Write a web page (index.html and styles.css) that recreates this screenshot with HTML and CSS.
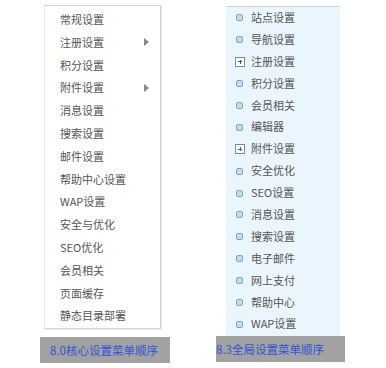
FILE: index.html
```html
<!DOCTYPE html>
<html lang="zh-CN">
<head>
  <meta charset="UTF-8">
  <title>设置菜单顺序</title>
  <link rel="stylesheet" href="styles.css">
</head>
<body>
  <div class="compare">
    <div class="col col-old">
      <ul class="menu-old">
        <li>常规设置</li>
        <li class="sub">注册设置</li>
        <li>积分设置</li>
        <li class="sub">附件设置</li>
        <li>消息设置</li>
        <li>搜索设置</li>
        <li>邮件设置</li>
        <li>帮助中心设置</li>
        <li>WAP设置</li>
        <li>安全与优化</li>
        <li>SEO优化</li>
        <li>会员相关</li>
        <li>页面缓存</li>
        <li>静态目录部署</li>
      </ul>
      <div class="caption caption-old">8.0核心设置菜单顺序</div>
    </div>

    <div class="col col-new">
      <ul class="menu-new">
        <li><span class="dot"></span>站点设置</li>
        <li><span class="dot"></span>导航设置</li>
        <li><span class="plus"></span>注册设置</li>
        <li><span class="dot"></span>积分设置</li>
        <li><span class="dot"></span>会员相关</li>
        <li><span class="dot"></span>编辑器</li>
        <li><span class="plus"></span>附件设置</li>
        <li><span class="dot"></span>安全优化</li>
        <li><span class="dot"></span>SEO设置</li>
        <li><span class="dot"></span>消息设置</li>
        <li><span class="dot"></span>搜索设置</li>
        <li><span class="dot"></span>电子邮件</li>
        <li><span class="dot"></span>网上支付</li>
        <li><span class="dot"></span>帮助中心</li>
        <li><span class="dot"></span>WAP设置</li>
      </ul>
      <div class="caption caption-new">8.3全局设置菜单顺序</div>
    </div>
  </div>
</body>
</html>
```

FILE: styles.css
```css
body {
  margin: 0;
  background: #fff;
  font-family: "Noto Sans CJK SC", "Noto Sans", sans-serif;
  font-size: 11px;
  color: #555;
}
ul {
  list-style: none;
  margin: 0;
  padding: 0;
}
.compare {
  display: flex;
  align-items: flex-start;
}
.col {
  display: flex;
  flex-direction: column;
}
.col-old {
  margin-left: 40px;
  width: 130px;
  padding-top: 5px;
}
.col-new {
  margin-left: 46px;
  width: 129px;
  padding-top: 6px;
}

/* 8.0 菜单 */
.menu-old {
  margin-left: 4px;
  width: 115px;
  border-top: 1px solid #d4d4d4;
  border-left: 1px solid #e6e6e6;
  border-right: 1px solid #cfcfcf;
  border-bottom: 1px solid #d4d4d4;
  box-shadow: 1px 1px 1px #eee;
  padding: 2px 0 1px;
  background: #fff;
}
.menu-old li {
  height: 22.8px;
  line-height: 22.8px;
  padding-left: 15px;
  position: relative;
}
.menu-old li.sub::after {
  content: "";
  position: absolute;
  right: 11px;
  top: 7.5px;
  border-left: 5px solid #888;
  border-top: 4px solid transparent;
  border-bottom: 4px solid transparent;
}

/* 8.3 菜单 */
.menu-new {
  margin-left: 10px;
  width: 114px;
  border-top: 1px solid #c9d6df;
  background: #eaf5fd;
  padding-bottom: 1px;
}
.menu-new li {
  height: 21.9px;
  line-height: 21.9px;
  padding-left: 9px;
  display: flex;
  align-items: center;
}
.dot {
  width: 5px;
  height: 5px;
  border: 1px solid #7ba6c9;
  border-radius: 2px;
  background: #c2dbee;
  margin: 0 8px 0 1px;
}
.plus {
  width: 8px;
  height: 8px;
  border: 1px solid #6f8fb0;
  background: #fff;
  margin-right: 6px;
  position: relative;
}
.plus::before,
.plus::after {
  content: "";
  position: absolute;
  background: #3c5f86;
}
.plus::before {
  left: 2px;
  top: 3.5px;
  width: 4px;
  height: 1px;
}
.plus::after {
  left: 3.5px;
  top: 2px;
  width: 1px;
  height: 4px;
}

.caption {
  height: 26px;
  line-height: 26px;
  background: #a2a2a2;
  color: #2f53d6;
  font-size: 11.5px;
  white-space: nowrap;
}
.caption-old {
  margin-top: 8px;
  padding-left: 10px;
}
.caption-new {
  margin-top: 0;
  padding-left: 0;
}
```
